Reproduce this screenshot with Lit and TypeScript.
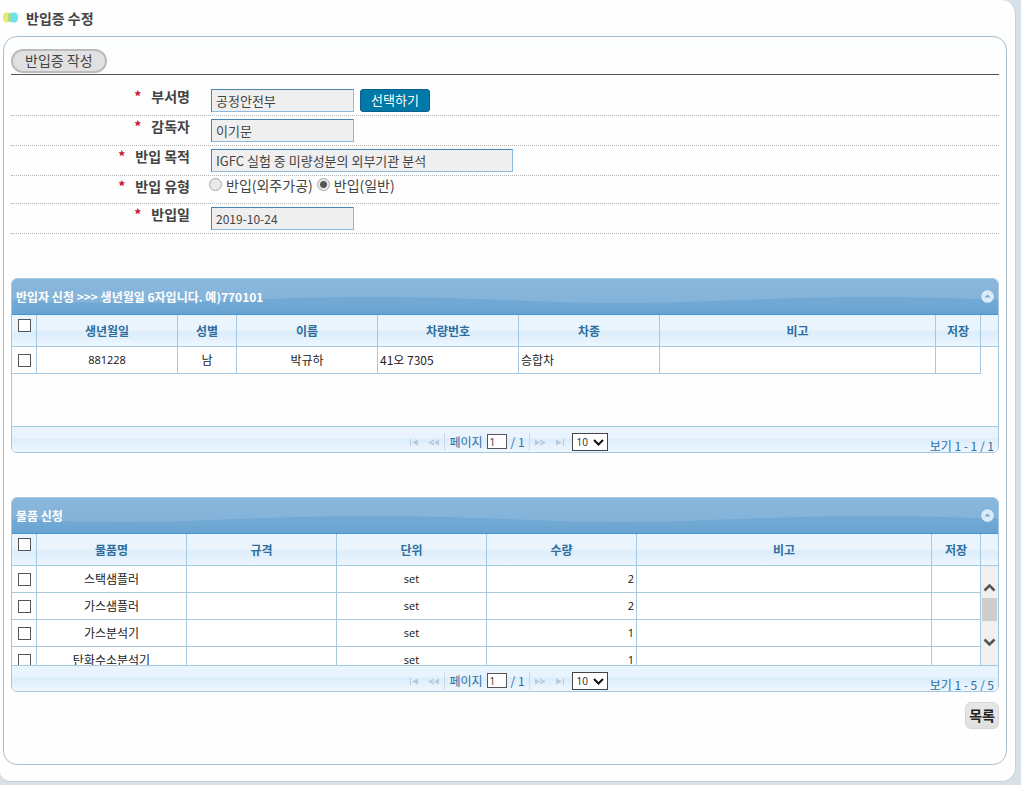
import { LitElement, html, css, svg } from "lit";
import { customElement, property, state } from "lit/decorators.js";
import { styleMap } from "lit/directives/style-map.js";
import { classMap } from "lit/directives/class-map.js";

interface Column {
  label: string;
  width?: number;
  align?: "left" | "center" | "right";
}

const font = css`"Noto Sans CJK KR", "Noto Sans", sans-serif`;

@customElement("data-grid")
class DataGrid extends LitElement {
  @property() caption = "";
  @property() info = "";
  @property({ attribute: false }) columns: Column[] = [];
  @property({ attribute: false }) rows: string[][] = [];
  @property({ type: Boolean }) scroller = false;
  @state() private open = true;

  static styles = css`
    :host { display: block; font: 12px/16px ${font}; color: #222; }
    * { box-sizing: border-box; }
    .grid { border: 1px solid #a6c9e2; border-radius: 6px; overflow: hidden; background: #fdfdfd; }
    .title {
      position: relative; display: flex; align-items: center; justify-content: space-between;
      height: 36px; padding: 0 4px; color: #fff; font-weight: bold;
      background: linear-gradient(#8ab7dc, #80b1d8); border-bottom: 1px solid #4297d7;
    }
    .wave { position: absolute; inset: 0; width: 100%; height: 100%; }
    .caption { position: relative; }
    .fold { position: relative; width: 13px; height: 13px; padding: 0; border: 0; background: none; }
    .fold svg { display: block; }
    table { width: 100%; table-layout: fixed; border-collapse: separate; border-spacing: 0; }
    th, td { padding: 0 2px; border-right: 1px solid #a6c9e2; border-bottom: 1px solid #a6c9e2; white-space: nowrap; overflow: hidden; }
    th { height: 32px; color: #2e6e9e; text-align: center; }
    .head { background: linear-gradient(#e9f4fe 0%, #ebf4fc 45%, #dcedfb 55%, #eef7ff 100%); }
    .head th:last-child { border-right: 0; }
    td { height: 27px; background: #fff; text-align: center; }
    .left { text-align: left; }
    .right { text-align: right; }
    .latin { font-family: "Open Sans", sans-serif; font-size: 11px; color: #111; }
    th.pick { vertical-align: top; padding-top: 4px; }
    .pick { line-height: 0; }
    input[type="checkbox"] {
      appearance: none; width: 13px; height: 13px; margin: 0; border: 1px solid #555; background: #fff;
    }
    .body { display: flex; height: 79px; }
    .body.scrolls { height: 99px; }
    .view { flex: 1; overflow-y: auto; scrollbar-width: none; }
    .gutter { width: 17px; }
    .bar { display: flex; flex-direction: column; align-items: center; background: #f0f0f0; padding-top: 11px; }
    .bar button { width: 17px; height: 21px; padding: 0; border: 0; background: none; }
    .bar svg { display: block; margin: auto; }
    .thumb { width: 15px; height: 23px; background: #cdcdcd; margin-bottom: 11px; }
    .pager {
      display: grid; grid-template-columns: 1fr auto 1fr; height: 26px; color: #2e6e9e;
      border-top: 1px solid #a6c9e2; background: linear-gradient(#eaf4fd 0%, #e8f3fd 42%, #dcedfb 50%, #eef7ff 100%);
    }
    .controls { display: flex; align-items: center; gap: 4px; padding: 4px 0 0 6px; }
    .nav { display: flex; gap: 8px; }
    .nav button { width: 12px; height: 8px; padding: 0; border: 0; background: none; }
    .nav svg { display: block; fill: #b2cbdd; }
    .sep { width: 1px; height: 18px; background: #ccd9e4; }
    .page { display: flex; align-items: center; gap: 4px; }
    .page input { width: 20px; height: 15px; padding: 0 2px; border: 1px solid #555; font: 10px/13px "Open Sans", sans-serif; color: #333; background: #fff; }
    .size { position: relative; display: flex; margin-left: 2px; }
    select { appearance: none; width: 36px; height: 18px; padding: 0 0 0 4px; border: 1px solid #444; border-radius: 0; background: #fff; color: #222; font: 10px/14px "Open Sans", sans-serif; }
    .size svg { position: absolute; right: 4px; top: 6px; pointer-events: none; }
    .info { justify-self: end; align-self: end; padding-right: 4px; line-height: 12px; }
  `;

  private cols() {
    return html`<colgroup>
      <col style="width:25px" />
      ${this.columns.map((c) => html`<col style=${styleMap(c.width ? { width: `${c.width}px` } : {})} />`)}
    </colgroup>`;
  }

  private move(step: number) {
    this.renderRoot.querySelector(".view")?.scrollBy(0, step);
  }

  private arrow(kind: "first" | "prev" | "next" | "last", label: string) {
    const flip = kind === "next" || kind === "last";
    const shape =
      kind === "first" || kind === "last"
        ? svg`<path d="M2 1h1v7H2z M4 4.5L10 1.5v6z" />`
        : svg`<path d="M0 4.5L6 1.5v2L3 4.5l3 1v2z M6 4.5L11 1.5v6z" />`;
    return html`<button type="button" aria-label=${label}>
      <svg width="12" height="9" viewBox="0 0 12 9"><g transform=${flip ? "translate(12 0) scale(-1 1)" : ""}>${shape}</g></svg>
    </button>`;
  }

  render() {
    return html`<section class="grid">
      <div class="title">
        <svg class="wave" aria-hidden="true">
          <defs>
            <linearGradient id="deep" x1="0" y1="0" x2="0" y2="1">
              <stop offset="0.4" stop-color="#71a8d4" /><stop offset="1" stop-color="#68a2d0" />
            </linearGradient>
            <pattern id="swell" x="110" width="500" height="36" patternUnits="userSpaceOnUse">
              <path d="M0 24C90 24 140 18 250 18S410 24 500 24V36H0Z" fill="url(#deep)" />
            </pattern>
          </defs>
          <rect width="100%" height="100%" fill="url(#swell)" />
        </svg>
        <span class="caption">${this.caption}</span>
        <button class="fold" type="button" aria-label="접기" @click=${() => (this.open = !this.open)}>
          <svg width="13" height="13" viewBox="0 0 13 13">
            <circle cx="6.5" cy="6.5" r="6.3" fill="#dcebfa" />
            <path d="M3.5 7.5L6.5 4.5L9.5 7.5Z" fill="#7da7c9" />
          </svg>
        </button>
      </div>
      ${this.open ? this.content() : ""}
    </section>`;
  }

  private content() {
    return html`
      <table class="head">
        <colgroup>
          <col style="width:25px" />
          ${this.columns.map((c) => html`<col style=${styleMap(c.width ? { width: `${c.width}px` } : {})} />`)}
          <col style="width:17px" />
        </colgroup>
        <thead>
          <tr>
            <th class="pick"><input type="checkbox" aria-label="전체 선택" /></th>
            ${this.columns.map((c) => html`<th scope="col">${c.label}</th>`)}
            <th></th>
          </tr>
        </thead>
      </table>
      <div class=${classMap({ body: true, scrolls: this.scroller })}>
        <div class="view">
          <table>
            ${this.cols()}
            <tbody>
              ${this.rows.map(
                (r) => html`<tr>
                  <td class="pick"><input type="checkbox" aria-label=${r[0]} /></td>
                  ${r.map(
                    (v, i) =>
                      html`<td class=${classMap({
                        left: this.columns[i].align === "left",
                        right: this.columns[i].align === "right",
                        latin: /^[\x20-\x7e]+$/.test(v),
                      })}>${v}</td>`
                  )}
                </tr>`
              )}
            </tbody>
          </table>
        </div>
        ${this.scroller
          ? html`<div class="gutter bar">
              <button type="button" aria-label="위로" @click=${() => this.move(-27)}>
                <svg width="13" height="9" viewBox="0 0 13 9"><path d="M1.5 7.5l5-5 5 5" fill="none" stroke="#555" stroke-width="2.6" /></svg>
              </button>
              <div class="thumb"></div>
              <button type="button" aria-label="아래로" @click=${() => this.move(27)}>
                <svg width="13" height="9" viewBox="0 0 13 9"><path d="M1.5 1.5l5 5 5-5" fill="none" stroke="#555" stroke-width="2.6" /></svg>
              </button>
            </div>`
          : html`<div class="gutter"></div>`}
      </div>
      <div class="pager">
        <span></span>
        <div class="controls">
          <div class="nav">${this.arrow("first", "처음")}${this.arrow("prev", "이전")}</div>
          <span class="sep"></span>
          <label class="page">페이지 <input type="text" value="1" /> <span>/ 1</span></label>
          <span class="sep"></span>
          <div class="nav">${this.arrow("next", "다음")}${this.arrow("last", "마지막")}</div>
          <div class="size">
            <select aria-label="페이지당 행 수"><option>10</option><option>20</option><option>30</option></select>
            <svg width="11" height="7" viewBox="0 0 11 7"><path d="M1 1l4.500 4.500L10 1" fill="none" stroke="#111" stroke-width="2" /></svg>
          </div>
        </div>
        <span class="info">${this.info}</span>
      </div>
    `;
  }
}

@customElement("app-root")
class AppRoot extends LitElement {
  static styles = css`
    :host { display: block; min-height: 100vh; padding: 0 5px 4px 0; box-sizing: border-box; background: #d8e1e7; font: 14px/20px ${font}; color: #444; }
    * { box-sizing: border-box; }
    .sheet { padding: 8px 8px 16px 3px; background: #fefefe; border: solid #c3d0d8; border-width: 0 1px 1px 0; border-radius: 0 14px 14px 10px; }
    h1 { display: flex; align-items: center; gap: 8px; margin: 0 0 8px; font-size: 14px; line-height: 20px; }
    .panel { min-height: 728px; padding: 12px 7px 35px; border: 1px solid #a9bdca; border-radius: 14px; background: linear-gradient(#fafdff, #fefefe 16px); }
    .tabs { display: flex; padding-bottom: 1px; border-bottom: 1px solid #555; }
    .tab { height: 24px; padding: 0 12px 2px; border: 2px solid #bbb; border-radius: 12px; background: #e1e1e1; color: #444; font: 14px/18px ${font}; }
    .form { padding-top: 11px; }
    .row { display: grid; grid-template-columns: 179px 1fr; column-gap: 21px; border-bottom: 1px dotted #b5b5b5; }
    .name { text-align: right; font-weight: bold; }
    .star { margin-right: 10px; color: #c8102e; }
    .field { display: flex; gap: 6px; padding: 3px 0; }
    .field.radios { height: 27px; gap: 4px; padding: 0; margin-left: -2px; align-items: flex-start; }
    .text { width: 143px; height: 23px; padding: 0 4px 1px; border: 1px solid; border-color: #4a86b4 #8dbbdc #8dbbdc #4a86b4; background: #efefef; color: #444; font: 13px/20px ${font}; }
    .wide { width: 302px; }
    .date { font-size: 12px; }
    .choose { height: 23px; padding: 0 10px 1px; border: 1px solid #0a5f8c; border-radius: 3px; background: #0078a8; color: #fff; font: 13px/20px ${font}; }
    .radios label { line-height: 18px; }
    .radios input { appearance: none; width: 13px; height: 13px; margin: 2px 0 0; border: 1px solid #aaa; border-radius: 50%; background: #e8e8e8; }
    .radios input:checked { background: radial-gradient(circle, #555 3px, #e8e8e8 4px); }
    .first { margin-top: 44px; }
    .second { margin-top: 44px; }
    .actions { display: flex; justify-content: flex-end; margin-top: 10px; }
    .list { height: 27px; padding: 0 3px 2px; border: 1px solid #d6d6d6; border-radius: 6px; background: linear-gradient(#e8e8e8, #e0e0e0); color: #222; font: bold 14px/20px ${font}; }
  `;

  private people: Column[] = [
    { label: "생년월일", width: 141 },
    { label: "성별", width: 59 },
    { label: "이름", width: 141 },
    { label: "차량번호", width: 141, align: "left" },
    { label: "차종", width: 141, align: "left" },
    { label: "비고" },
    { label: "저장", width: 45 },
  ];

  private goods: Column[] = [
    { label: "물품명", width: 150 },
    { label: "규격", width: 150 },
    { label: "단위", width: 150 },
    { label: "수량", width: 150, align: "right" },
    { label: "비고" },
    { label: "저장", width: 49 },
  ];

  private items = [
    ["스택샘플러", "", "set", "2", "", ""],
    ["가스샘플러", "", "set", "2", "", ""],
    ["가스분석기", "", "set", "1", "", ""],
    ["탄화수소분석기", "", "set", "1", "", ""],
  ];

  private name(text: string, id: string) {
    return html`<label class="name" for=${id}><span class="star">*</span>${text}</label>`;
  }

  render() {
    return html`<main class="sheet">
      <h1>
        <svg width="15" height="12" viewBox="0 0 15 12" aria-hidden="true">
          <rect x="6" y="0.500" width="9" height="10" rx="4" fill="#6fe3ea" />
          <rect x="0" y="0.500" width="8" height="10" rx="4" fill="#e9ea6c" />
          <path d="M5 1.500h4v8H5z" fill="#8fdc9c" opacity=".8" />
        </svg>
        반입증 수정
      </h1>
      <div class="panel">
        <div class="tabs"><button class="tab" type="button">반입증 작성</button></div>
        <form class="form">
          <div class="row">
            ${this.name("부서명", "dept")}
            <div class="field">
              <input class="text" id="dept" readonly value="공정안전부" />
              <button class="choose" type="button">선택하기</button>
            </div>
          </div>
          <div class="row">
            ${this.name("감독자", "boss")}
            <div class="field"><input class="text" id="boss" readonly value="이기문" /></div>
          </div>
          <div class="row">
            ${this.name("반입 목적", "goal")}
            <div class="field"><input class="text wide" id="goal" readonly value="IGFC 실험 중 미량성분의 외부기관 분석" /></div>
          </div>
          <div class="row">
            ${this.name("반입 유형", "outer")}
            <div class="field radios">
              <input type="radio" name="kind" id="outer" disabled /><label for="outer">반입(외주가공)</label>
              <input type="radio" name="kind" id="plain" checked /><label for="plain">반입(일반)</label>
            </div>
          </div>
          <div class="row">
            ${this.name("반입일", "day")}
            <div class="field"><input class="text date" id="day" readonly value="2019-10-24" /></div>
          </div>
        </form>
        <data-grid
          class="first"
          caption="반입자 신청 >>> 생년월일 6자입니다. 예)770101"
          info="보기 1 - 1 / 1"
          .columns=${this.people}
          .rows=${[["881228", "남", "박규하", "41오 7305", "승합차", "", ""]]}
        ></data-grid>
        <data-grid
          class="second"
          caption="물품 신청"
          info="보기 1 - 5 / 5"
          scroller
          .columns=${this.goods}
          .rows=${this.items}
        ></data-grid>
        <div class="actions"><button class="list" type="button">목록</button></div>
      </div>
    </main>`;
  }
}
